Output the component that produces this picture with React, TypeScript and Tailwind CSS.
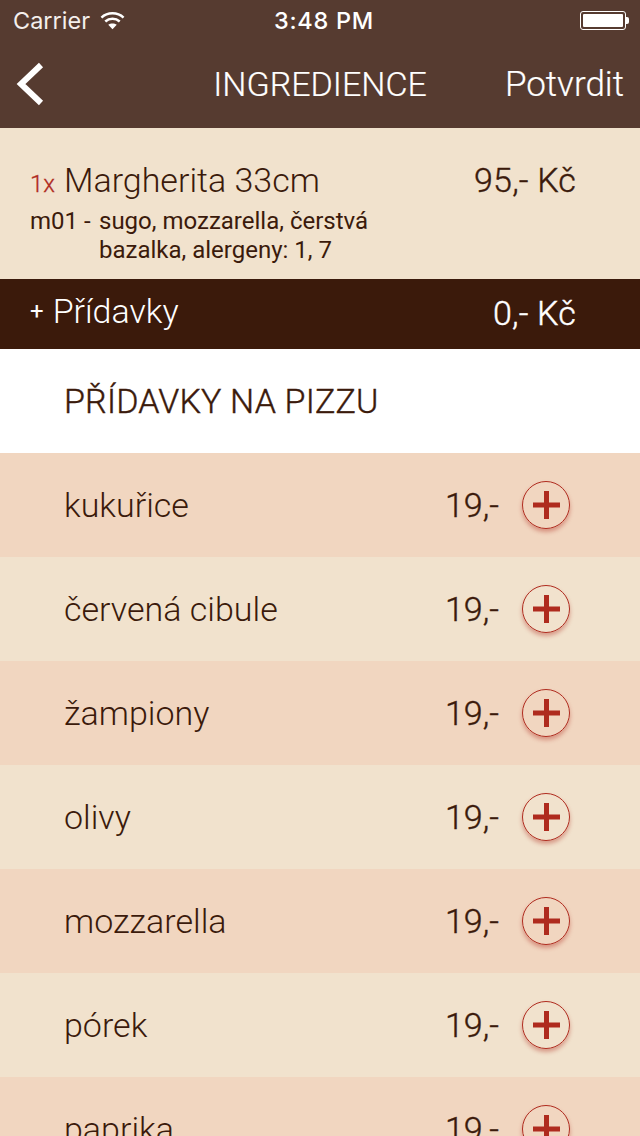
import React from 'react';

const extras = ['kukuřice', 'červená cibule', 'žampiony', 'olivy', 'mozzarella', 'pórek', 'paprika'];

const PlusButton: React.FC = () => (
  <div className="w-[48px] h-[48px] rounded-full border-[1.5px] border-[#AF2B1E] flex items-center justify-center shadow-[0_3px_4px_rgba(175,43,30,0.4)]">
    <svg width="27" height="28" viewBox="0 0 27 28" fill="#AF2B1E">
      <rect x="0" y="11.5" width="27" height="5" />
      <rect x="11" y="0" width="5" height="28" />
    </svg>
  </div>
);

const StatusBar: React.FC = () => (
  <div className="h-[40px] flex items-center justify-between pl-[13px] pr-[11px] text-white font-['Inter',sans-serif] relative">
    <div className="flex items-center gap-[10px]">
      <span className="text-[23.5px] font-normal text-[#F4EFEC] leading-none mt-[2px]">Carrier</span>
      <svg width="25" height="19" viewBox="0 0 26 19" fill="none" stroke="#fff" strokeWidth="2.6">
        <path d="M1.5 6.5C7.8 0.6 18.2 0.6 24.5 6.5" />
        <path d="M5.5 10.5C9.8 6.6 16.2 6.6 20.5 10.5" />
        <path d="M13 18.5L8.6 14C11 12.1 15 12.1 17.4 14Z" fill="#fff" stroke="none" />
      </svg>
    </div>
    <span className="absolute left-0 right-0 pl-[8px] mt-[2px] text-center font-medium text-[23.5px] tracking-[0.7px] leading-none">3:48 PM</span>
    <div className="flex items-center">
      <div className="w-[46px] h-[19px] rounded-[3px] border border-white p-[2px]">
        <div className="w-full h-full bg-white rounded-[1px]" />
      </div>
      <div className="w-[3px] h-[7px] bg-white rounded-r-[2px]" />
    </div>
  </div>
);

const App: React.FC = () => {
  return (
    <div className="w-[640px] h-[1136px] overflow-hidden bg-white font-['Roboto',sans-serif] text-[#3B1A0B]">
      <header className="h-[128px] bg-[#563B30] text-white">
        <StatusBar />
        <div className="h-[88px] flex items-center justify-between pl-[16px] pr-[16px] relative">
          <svg width="28" height="44" viewBox="0 0 28 44" fill="none" stroke="#fff" strokeWidth="6">
            <path d="M25 3L5 22L25 41" />
          </svg>
          <span className="absolute left-0 right-0 text-center text-[34px] font-light leading-none [-webkit-text-stroke:0.2px_white]">INGREDIENCE</span>
          <span className="text-[35px] font-light leading-none [-webkit-text-stroke:0.2px_white]">Potvrdit</span>
        </div>
      </header>

      <section className="h-[151px] bg-[#F1E2CD] pl-[30px] pr-[64px] pt-[35px]">
        <div className="flex items-start justify-between">
          <div className="flex items-baseline gap-[9px] font-light leading-none">
            <span className="text-[24px] text-[#AF2B1E] [-webkit-text-stroke:0.3px_#AF2B1E]">1x</span>
            <span className="text-[34px]">Margherita 33cm</span>
          </div>
          <span className="text-[34px] leading-none font-light tracking-[0.15px] [-webkit-text-stroke:0.4px_#3B1A0B]">95,- Kč</span>
        </div>
        <div className="flex mt-[10px] text-[24px] leading-[29px] font-normal">
          <span className="w-[69px] shrink-0">m01 -</span>
          <span className="w-[290px]">sugo, mozzarella, čerstvá bazalka, alergeny: 1, 7</span>
        </div>
      </section>

      <section className="h-[70px] bg-[#3B1A0B] text-white pl-[30px] pr-[64px] flex items-center justify-between">
        <div className="flex items-center gap-[9px] font-light leading-none pb-[6px]">
          <span className="text-[24px] font-normal">+</span>
          <span className="text-[34px]">Přídavky</span>
        </div>
        <span className="text-[34px] leading-none font-light tracking-[0.15px] pb-[3px] [-webkit-text-stroke:0.4px_white]">0,- Kč</span>
      </section>

      <section className="h-[104px] bg-white pl-[64px] flex items-center">
        <h2 className="text-[34px] font-light tracking-[0.18px] leading-none [-webkit-text-stroke:0.4px_#3B1A0B]">PŘÍDAVKY NA PIZZU</h2>
      </section>

      {extras.map((name, i) => (
        <div
          key={name}
          className={`h-[104px] pl-[64px] pr-[70px] flex items-center justify-between ${i % 2 === 0 ? 'bg-[#F1D6C0]' : 'bg-[#F1E2CD]'}`}
        >
          <span className="text-[34px] font-light leading-none">{name}</span>
          <div className="flex items-center gap-[23px]">
            <span className="text-[34px] font-light leading-none [-webkit-text-stroke:0.4px_#3B1A0B]">19,-</span>
            <PlusButton />
          </div>
        </div>
      ))}
    </div>
  );
};

export default App;
